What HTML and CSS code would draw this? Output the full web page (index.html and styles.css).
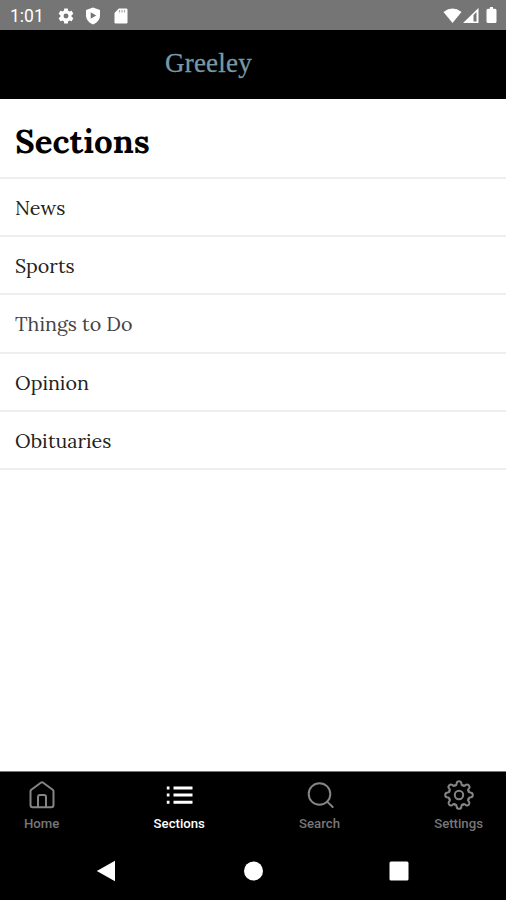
FILE: index.html
```html
<!DOCTYPE html>
<html lang="en">
<head>
    <meta charset="UTF-8">
    <meta name="viewport" content="width=device-width, initial-scale=1.0">
    <title>Greeley - Sections</title>
    <link rel="stylesheet" href="styles.css">
</head>
<body>
<div class="app">
    <div class="status-bar">
        <span class="clock">1:01</span>
        <svg class="status-gear" width="18" height="18" viewBox="0 0 24 24">
            <path fill="#fff" fill-rule="evenodd" d="M19.4 13a7.500 7.500 0 0 0 0-2l2.100-1.650a.5.5 0 0 0 .12-.64l-2-3.460a.5.5 0 0 0-.61-.22l-2.490 1a7.300 7.300 0 0 0-1.690-.98l-.38-2.650A.5.5 0 0 0 14 2h-4a.5.5 0 0 0-.49.420l-.38 2.650c-.61.250-1.170.590-1.690.980l-2.490-1a.5.5 0 0 0-.61.220l-2 3.460a.5.5 0 0 0 .12.640L4.570 11a8 8 0 0 0 0 2l-2.110 1.650a.5.5 0 0 0-.12.640l2 3.460c.12.220.390.300.610.220l2.490-1c.520.400 1.080.730 1.690.980l.380 2.650c.030.240.240.400.490.400h4c.250 0 .46-.16.490-.4l.380-2.650c.61-.25 1.170-.59 1.690-.98l2.490 1c.23.090.490 0 .61-.22l2-3.460a.5.5 0 0 0-.12-.64zM12 15.300a3.300 3.300 0 1 1 0-6.600 3.300 3.300 0 0 1 0 6.600z"/>
        </svg>
        <svg class="status-shield" width="16" height="18" viewBox="0 0 16 18">
            <path fill="#fff" d="M8 .5 15 3v5.500c0 4-3 7.300-7 9-4-1.700-7-5-7-9V3z"/>
            <path fill="#757575" d="M5.700 5.300v6.400L11.200 8.500z"/>
        </svg>
        <svg class="status-card" width="14" height="16" viewBox="0 0 14 16">
            <path fill="#fff" d="M4.800.5h7.400a1.300 1.300 0 0 1 1.300 1.300v12.400a1.300 1.300 0 0 1-1.300 1.300H1.800a1.300 1.300 0 0 1-1.300-1.300V5z"/>
            <path stroke="#aaa" stroke-width="1.200" d="M5.500 2v2.500M8 2v2.500M10.500 2v2.500"/>
        </svg>
        <svg class="status-signal" width="56" height="18" viewBox="0 0 56 18">
            <path fill="#fff" d="M.5 5Q9.500-1.800 18.500 5L9.500 16z"/>
            <path fill="#fff" fill-rule="evenodd" d="M20 16 35.500 1v15zM30.500 8V14.500H33.500V5z"/>
            <path fill="#fff" d="M47 0h3v1.800h2q1.500 0 1.500 1.500v11.200q0 1.500-1.500 1.500h-7q-1.500 0-1.500-1.500V3.300q0-1.500 1.500-1.500h2z"/>
        </svg>
    </div>

    <header class="header">
        <span class="logo">Greeley</span>
    </header>

    <main class="content">
        <h1>Sections</h1>
        <ul class="section-list">
            <li>News</li>
            <li>Sports</li>
            <li class="things">Things to Do</li>
            <li>Opinion</li>
            <li>Obituaries</li>
        </ul>
    </main>

    <nav class="tabs">
        <div class="tab">
            <svg width="30" height="30" viewBox="0 0 30 30">
                <path d="M3.500 11.500Q3.500 10.500 4.300 9.800L13.800 2.700Q15 1.800 16.200 2.700L25.700 9.800Q26.500 10.500 26.500 11.500V25Q26.500 27.300 24.200 27.300H5.800Q3.500 27.300 3.500 25ZM11 27V17Q11 15 13 15H17Q19 15 19 17V27"/>
            </svg>
            <span>Home</span>
        </div>
        <div class="tab active">
            <svg width="30" height="30" viewBox="0 0 30 30">
                <path d="M9.500 8H28.500M9.500 15H28.500M9.500 22.300H28.500M2.800 8H5.500M2.800 15H5.500M2.800 22.300H5.500"/>
            </svg>
            <span>Sections</span>
        </div>
        <div class="tab">
            <svg width="30" height="30" viewBox="0 0 30 30">
                <circle cx="14.500" cy="14" r="10.800"/>
                <path d="M22.100 21.600 27.700 27"/>
            </svg>
            <span>Search</span>
        </div>
        <div class="tab">
            <svg width="30" height="30" viewBox="-15 -15 30 30">
                <defs>
                    <path id="tooth" d="M-4-9.660C-2.800-9.300-2.500-10.300-2.300-12Q-2-13.800 0-13.800T2.300-12C2.500-10.300 2.800-9.300 4-9.660"/>
                </defs>
                <use href="#tooth"/>
                <use href="#tooth" transform="rotate(45)"/>
                <use href="#tooth" transform="rotate(90)"/>
                <use href="#tooth" transform="rotate(135)"/>
                <use href="#tooth" transform="rotate(180)"/>
                <use href="#tooth" transform="rotate(225)"/>
                <use href="#tooth" transform="rotate(270)"/>
                <use href="#tooth" transform="rotate(315)"/>
                <circle r="4.200"/>
            </svg>
            <span>Settings</span>
        </div>
    </nav>

    <div class="system-nav">
        <svg width="20" height="22" viewBox="0 0 20 22">
            <path fill="#fff" d="M.8 11 19 .8V21.200z"/>
        </svg>
        <svg width="20" height="20" viewBox="0 0 20 20">
            <circle cx="10.500" cy="10" r="9.500" fill="#fff"/>
        </svg>
        <svg width="20" height="20" viewBox="0 0 20 20">
            <rect x=".5" y=".5" width="19" height="19" rx="1.500" fill="#fff"/>
        </svg>
    </div>
</div>
</body>
</html>
```
FILE: styles.css
```css
* {
    box-sizing: border-box;
}

body {
    margin: 0;
    background-color: #fff;
    color: #222;
    font-family: Lora, 'Liberation Serif', serif;
}

svg {
    display: block;
    flex: none;
}

.app {
    display: flex;
    flex-direction: column;
    height: 900px;
    overflow: hidden;
}

.status-bar {
    display: flex;
    align-items: center;
    flex: none;
    height: 30px;
    padding: 1px 7px 0 10px;
    background-color: #757575;
}

.clock {
    width: 47px;
    font-family: Roboto, sans-serif;
    font-size: 17.5px;
    color: #fff;
}

.status-shield {
    margin-left: 10px;
}

.status-card {
    margin-left: 13px;
}

.status-signal {
    margin-left: auto;
}

.header {
    flex: none;
    height: 69px;
    padding: 17px 0 0 165px;
    background-color: #000;
}

.logo {
    display: block;
    font-family: 'Liberation Serif', serif;
    font-size: 27px;
    line-height: 32px;
    letter-spacing: 0.2px;
    color: #7799a6;
    -webkit-text-stroke: 0.3px #7799a6;
}

.content {
    flex: 1;
}

h1 {
    height: 80px;
    margin: 0;
    padding: 23px 15px 0;
    border-bottom: 2px solid #eee;
    font-size: 33px;
    line-height: 39px;
    color: #000;
}

.section-list {
    margin: 0;
    padding: 0;
    list-style: none;
}

.section-list li {
    height: 58.2px;
    padding: 0 15px;
    border-bottom: 2px solid #eee;
    font-size: 19.7px;
    line-height: 58px;
}

.section-list .things {
    color: #444;
}

.tabs {
    display: flex;
    justify-content: space-between;
    flex: none;
    height: 71px;
    padding: 8px 23px 0 24px;
    border-top: 1px solid #777;
    background-color: #000;
}

.tab {
    display: flex;
    flex-direction: column;
    align-items: center;
    font-family: Roboto, sans-serif;
    font-size: 13.2px;
    font-weight: 500;
    line-height: 16px;
    color: #777;
}

.tab svg {
    margin-bottom: 6px;
    fill: none;
    stroke: #858585;
    stroke-width: 2;
    stroke-linecap: round;
    stroke-linejoin: round;
}

.tab.active {
    color: #fff;
}

.tab.active svg {
    stroke: #fff;
    stroke-width: 3;
    stroke-linecap: butt;
}

.system-nav {
    display: flex;
    align-items: center;
    justify-content: space-between;
    flex: none;
    height: 58px;
    padding: 0 97px 0 96px;
    background-color: #000;
}
```
